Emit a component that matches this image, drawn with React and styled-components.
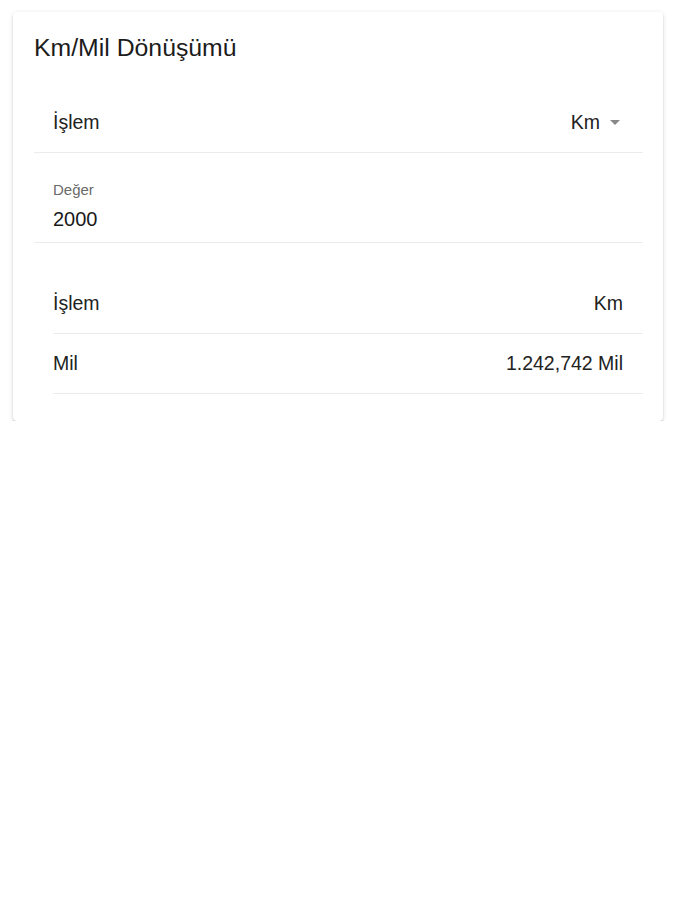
import styled, { createGlobalStyle } from 'styled-components';

const Global = createGlobalStyle`
  body {
    margin: 0;
    background: #fff;
    font-family: "Liberation Sans", Arial, sans-serif;
    color: #000;
  }
`;

const Card = styled.div`
  margin: 12px 12px 0 13px;
  background: #fff;
  border-radius: 4px;
  box-shadow: 0 3px 1px -2px rgba(0,0,0,0.2), 0 2px 2px 0 rgba(0,0,0,0.14), 0 1px 5px 0 rgba(0,0,0,0.12);
  padding: 0 20px 27px 21px;
`;

const Title = styled.h2`
  margin: 0;
  padding: 0;
  height: 81px;
  line-height: 72px;
  font-size: 24.8px;
  font-weight: 400;
  color: #1c1c1c;
`;

const List = styled.div`
  margin-top: ${p => p.gap || 0}px;
`;

const Row = styled.div`
  display: flex;
  align-items: center;
  justify-content: space-between;
  height: 60px;
  padding: 0 20px 0 19px;
  box-sizing: border-box;
  border-bottom: 1px solid #ececec;
  font-size: 19.5px;
  color: #222;
  ${p => p.inset && `
    margin-left: 19px;
    padding-left: 0;
  `}
`;

const Value = styled.span`
  display: flex;
  align-items: center;
  gap: 10px;
`;

const Caret = styled.span`
  width: 0;
  height: 0;
  border-left: 5px solid transparent;
  border-right: 5px solid transparent;
  border-top: 5px solid #888;
  margin-right: 3px;
`;

const Field = styled.div`
  height: 90px;
  padding: 28px 19px 0;
  box-sizing: border-box;
  border-bottom: 1px solid #ececec;
`;

const Label = styled.div`
  font-size: 15px;
  line-height: 17px;
  color: #6a6a6a;
  margin-bottom: 9px;
`;

const Input = styled.div`
  font-size: 20px;
  line-height: 24px;
  color: #1a1a1a;
`;

export default function App() {
  return (
    <>
      <Global />
      <Card>
        <Title>Km/Mil Dönüşümü</Title>
        <List>
          <Row>
            <span>İşlem</span>
            <Value>Km <Caret /></Value>
          </Row>
          <Field>
            <Label>Değer</Label>
            <Input>2000</Input>
          </Field>
        </List>
        <List gap={31}>
          <Row inset>
            <span>İşlem</span>
            <span>Km</span>
          </Row>
          <Row inset>
            <span>Mil</span>
            <span>1.242,742 Mil</span>
          </Row>
        </List>
      </Card>
    </>
  );
}
